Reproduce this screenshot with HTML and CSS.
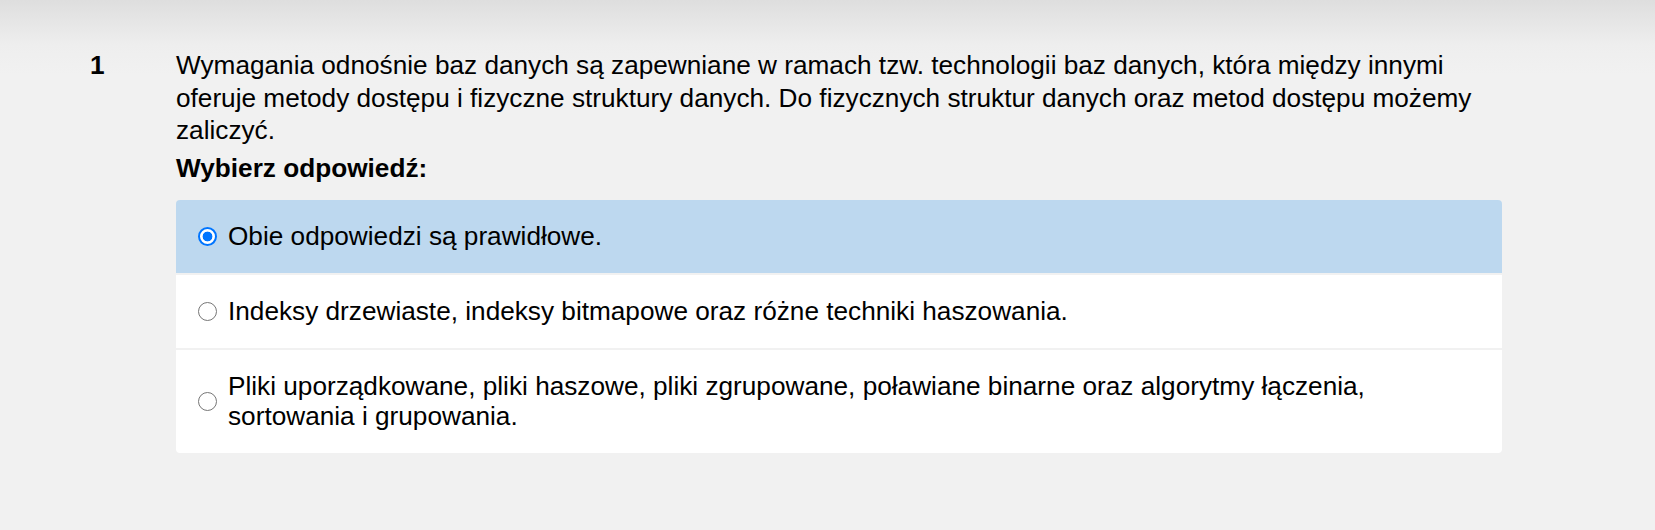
FILE: index.html
```html
<!DOCTYPE html>
<html lang="pl">
<head>
<meta charset="utf-8">
<title>Pytanie 1</title>
<link rel="stylesheet" href="styles.css">
</head>
<body>
<main class="page">
  <section class="question">
    <div class="q-number">1</div>
    <div class="q-body">
      <p class="q-text">Wymagania odnośnie baz danych są zapewniane w ramach tzw. technologii baz danych, która między innymi oferuje metody dostępu i fizyczne struktury danych. Do fizycznych struktur danych oraz metod dostępu możemy zaliczyć.</p>
      <p class="q-label">Wybierz odpowiedź:</p>
      <div class="answers">
        <label class="answer answer-selected">
          <input type="radio" name="q1" class="radio" checked>
          <span class="answer-text">Obie odpowiedzi są prawidłowe.</span>
        </label>
        <label class="answer">
          <input type="radio" name="q1" class="radio">
          <span class="answer-text">Indeksy drzewiaste, indeksy bitmapowe oraz różne techniki haszowania.</span>
        </label>
        <label class="answer">
          <input type="radio" name="q1" class="radio">
          <span class="answer-text">Pliki uporządkowane, pliki haszowe, pliki zgrupowane, poławiane binarne oraz algorytmy łączenia, sortowania i grupowania.</span>
        </label>
      </div>
    </div>
  </section>
</main>
</body>
</html>
```

FILE: styles.css
```css
html, body {
  margin: 0;
  padding: 0;
}

body {
  background: linear-gradient(to bottom, #dedede 0, #eeeeee 45px, #f1f1f1 75px, #f1f1f1 100%);
  min-height: 530px;
  font-family: "Liberation Sans", Arial, sans-serif;
  font-size: 26.2px;
  color: #000;
}

.page {
  padding: 49px 153px 0 0;
}

.question {
  display: flex;
}

.q-number {
  padding-left: 90px;
  box-sizing: border-box;
  width: 176px;
  flex: none;
  font-weight: bold;
  line-height: 32.5px;
}

.q-body {
  flex: 1;
  min-width: 0;
}

.q-text {
  margin: 0;
  line-height: 32.5px;
}

.q-label {
  margin: 5px 0 0;
  font-weight: bold;
  line-height: 32.5px;
}

.answers {
  margin-top: 16px;
  background: #f1f1f1;
  border-radius: 4px;
  overflow: hidden;
  display: flex;
  flex-direction: column;
  gap: 2px;
}

.answer {
  display: flex;
  align-items: center;
  gap: 11px;
  padding: 21px 22px 22px;
  background: #ffffff;
  line-height: 30px;
  cursor: pointer;
}

.answer-selected {
  background: #bdd8ef;
}

.radio {
  appearance: none;
  -webkit-appearance: none;
  margin: 0;
  flex: none;
  width: 19px;
  height: 19px;
  border-radius: 50%;
  border: 1.5px solid #767676;
  background: #ffffff;
  box-sizing: border-box;
}

.radio:checked {
  border: 2px solid #0075ff;
  background: radial-gradient(circle, #0075ff 0, #0075ff 4.6px, #ffffff 5.2px);
}

.answer-text {
  flex: 1;
}
```
